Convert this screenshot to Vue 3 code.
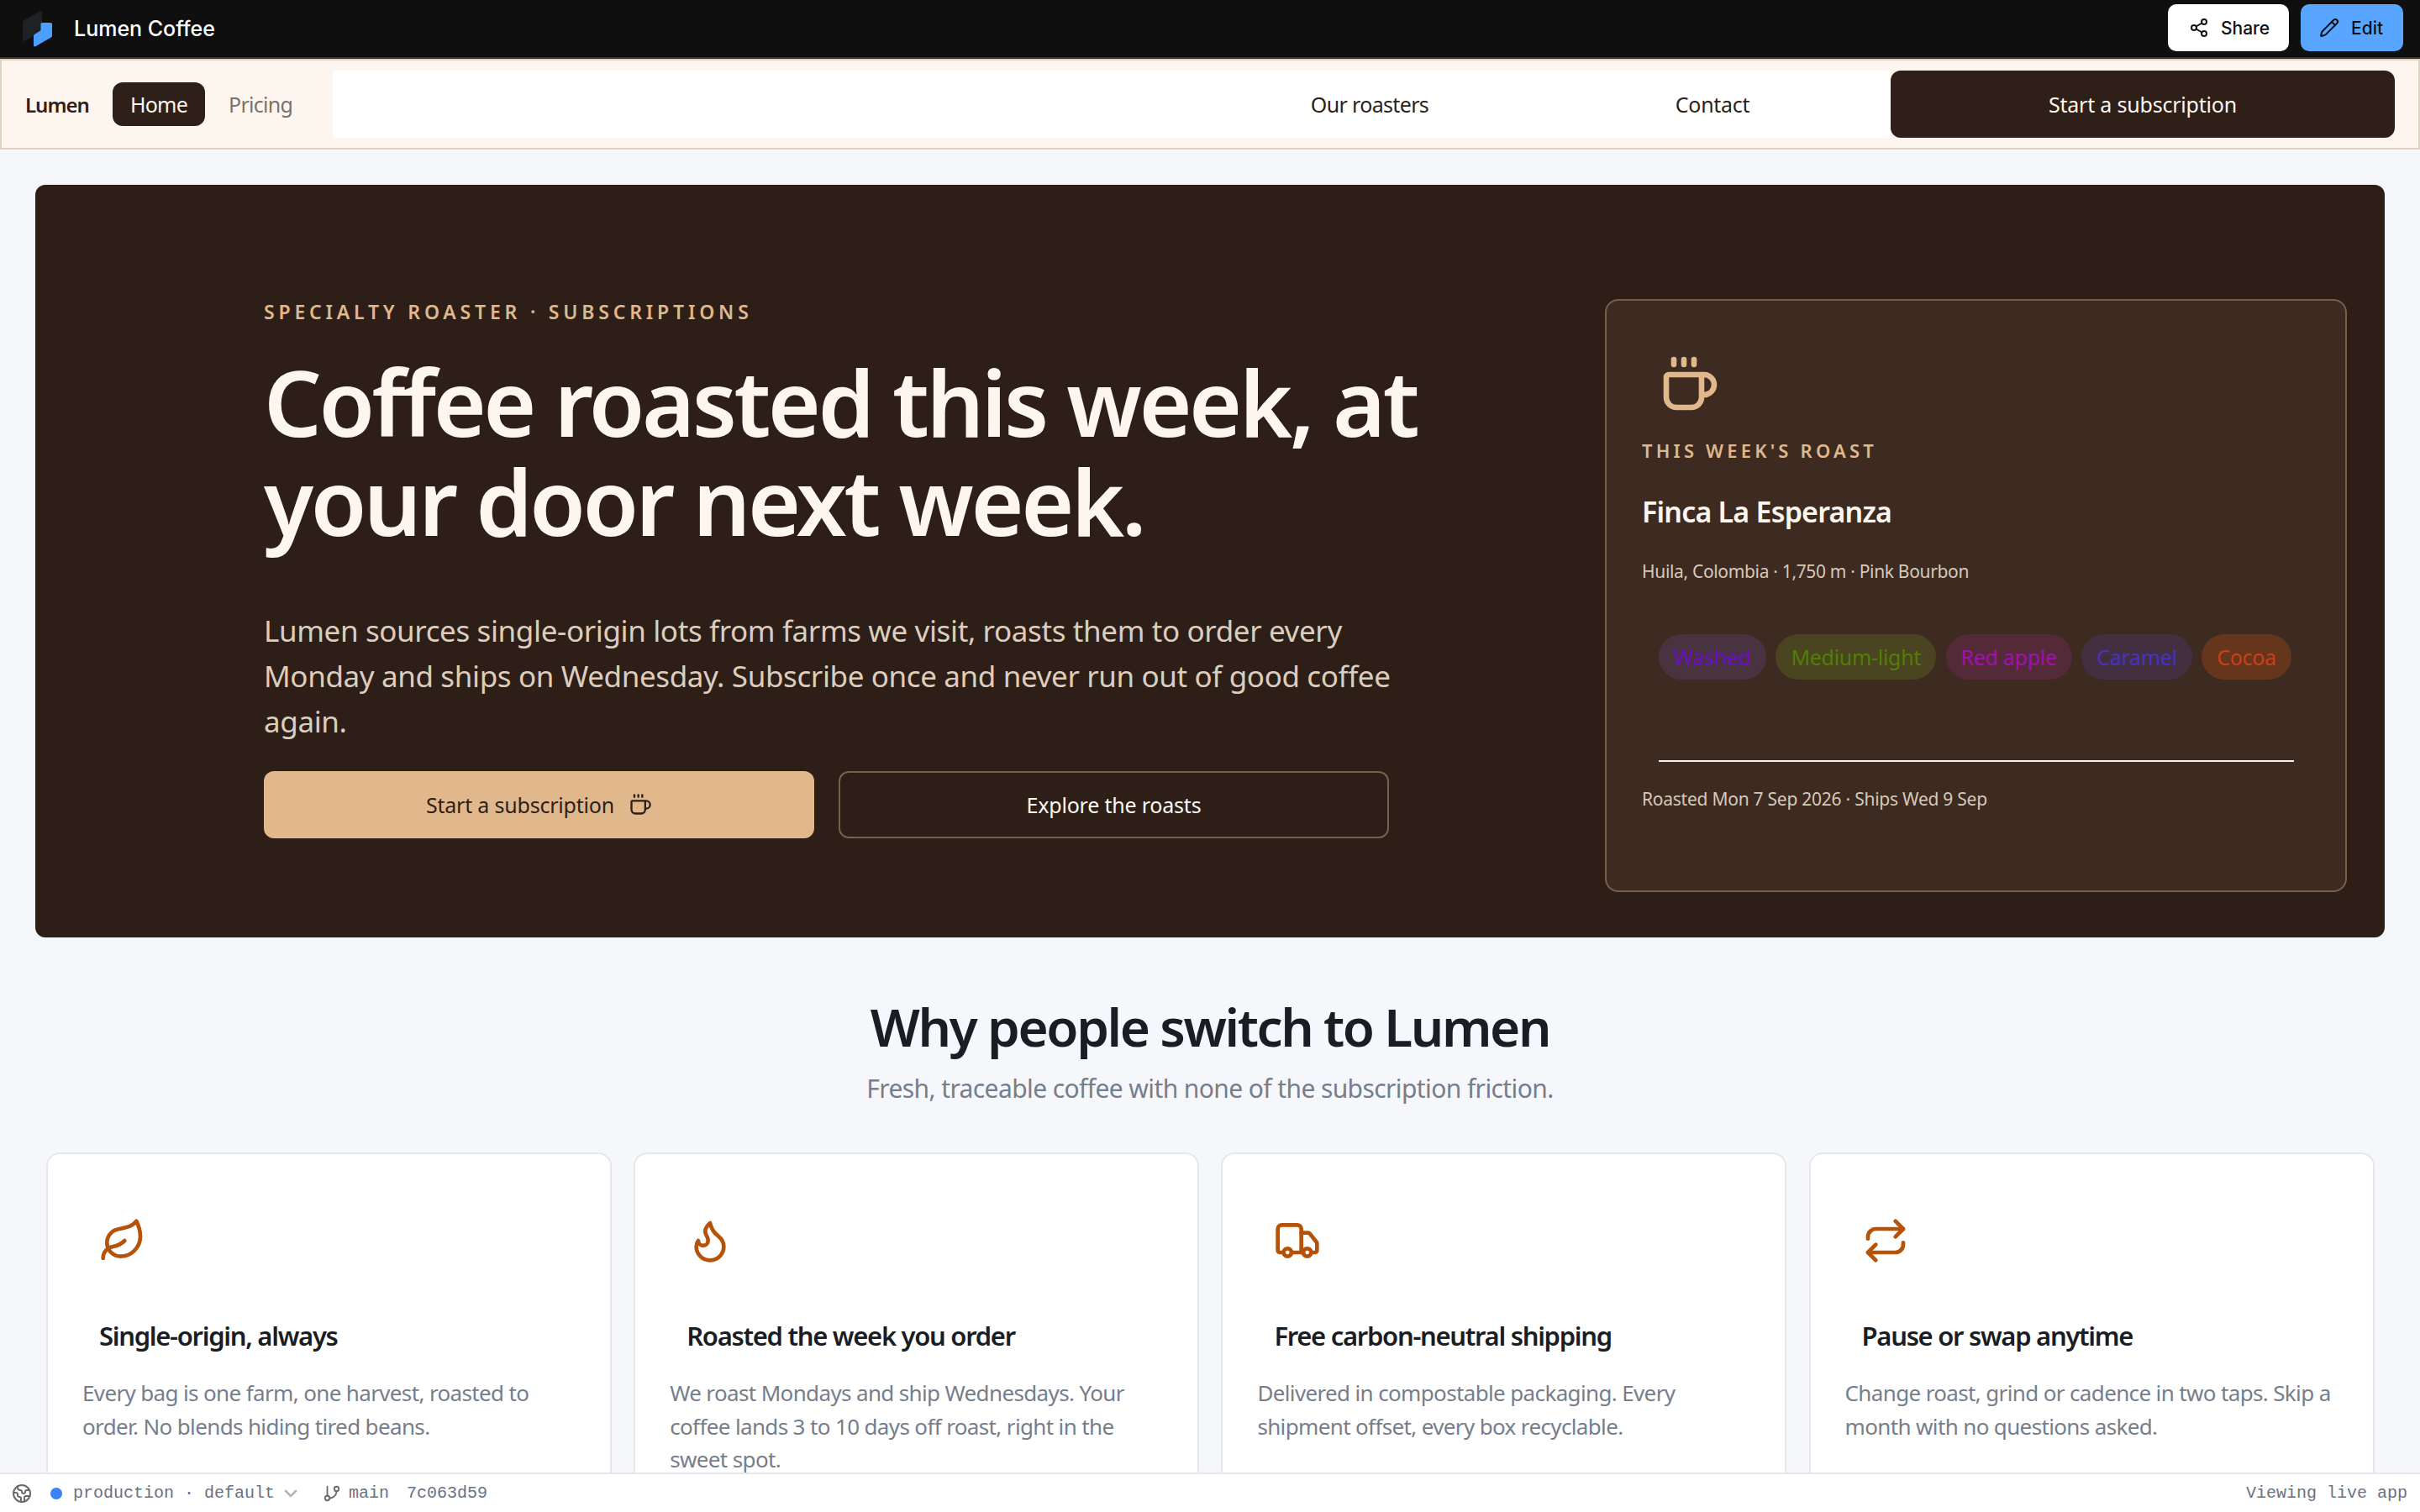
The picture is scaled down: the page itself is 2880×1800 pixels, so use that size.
<script setup>
const tags = [
  { label: 'Washed', c: 't1' },
  { label: 'Medium-light', c: 't2' },
  { label: 'Red apple', c: 't3' },
  { label: 'Caramel', c: 't4' },
  { label: 'Cocoa', c: 't5' }
]
const features = [
  { title: 'Single-origin, always', body: 'Every bag is one farm, one harvest, roasted to order. No blends hiding tired beans.', paths: ['M11 20A7 7 0 0 1 9.8 6.1C15.5 5 17 4.48 19 2c1 2 2 4.18 2 8 0 5.5-4.78 10-10 10Z', 'M2 21c0-3 1.85-5.36 5.08-6C9.5 14.52 12 13 13 12'], circles: [] },
  { title: 'Roasted the week you order', body: 'We roast Mondays and ship Wednesdays. Your coffee lands 3 to 10 days off roast, right in the sweet spot.', paths: ['M8.5 14.5A2.5 2.5 0 0 0 11 12c0-1.38-.5-2-1-3-1.072-2.143-.224-4.054 2-6 .5 2.5 2 4.9 4 6.5 2 1.6 3 3.5 3 5.5a7 7 0 1 1-14 0c0-1.153.433-2.294 1-3a2.5 2.5 0 0 0 2.5 2.5z'], circles: [] },
  { title: 'Free carbon-neutral shipping', body: 'Delivered in compostable packaging. Every shipment offset, every box recyclable.', paths: ['M14 18V6a2 2 0 0 0-2-2H4a2 2 0 0 0-2 2v11a1 1 0 0 0 1 1h2', 'M15 18H9', 'M19 18h2a1 1 0 0 0 1-1v-3.65a1 1 0 0 0-.22-.624l-3.48-4.35A1 1 0 0 0 17.52 8H14'], circles: [[17, 18], [7, 18]] },
  { title: 'Pause or swap anytime', body: 'Change roast, grind or cadence in two taps. Skip a month with no questions asked.', paths: ['m17 2 4 4-4 4', 'M3 11v-1a4 4 0 0 1 4-4h14', 'm7 22-4-4 4-4', 'M21 13v1a4 4 0 0 1-4 4H3'], circles: [] }
]
const cup = ['M10 2v2', 'M14 2v2', 'M16 8a1 1 0 0 1 1 1v8a4 4 0 0 1-4 4H7a4 4 0 0 1-4-4V9a1 1 0 0 1 1-1h14a4 4 0 1 1 0 8h-1', 'M6 2v2']
</script>

<template>
  <div class="app">
    <header class="topbar">
      <div class="brand">
        <svg class="logo" viewBox="0 0 36 44">
          <path d="M1.5 13 21.5 1.5V23L1.5 34.5Z" fill="#1e2125" stroke="#1e2125" stroke-width="3" stroke-linejoin="round" />
          <path d="M23 15.5H33.5V30L14.5 41V29.5L23 24Z" fill="#4d9fff" stroke="#4d9fff" stroke-width="3" stroke-linejoin="round" />
        </svg>
        <span class="brand-name">Lumen Coffee</span>
      </div>
      <div class="top-actions">
        <button class="top-btn share">
          <svg class="ic24" viewBox="0 0 24 24"><circle cx="18" cy="5" r="3" /><circle cx="6" cy="12" r="3" /><circle cx="18" cy="19" r="3" /><path d="M8.59 13.51 15.42 17.49" /><path d="M15.41 6.51 8.59 10.49" /></svg>
          <span>Share</span>
        </button>
        <button class="top-btn edit">
          <svg class="ic24" viewBox="0 0 24 24"><path d="M21.174 6.812a1 1 0 0 0-3.986-3.987L3.842 16.174a2 2 0 0 0-.5.83l-1.321 4.352a.5.5 0 0 0 .623.622l4.353-1.32a2 2 0 0 0 .83-.497z" /><path d="m15 5 4 4" /></svg>
          <span>Edit</span>
        </button>
      </div>
    </header>

    <main class="page">
      <nav class="nav">
        <span class="nav-logo">Lumen</span>
        <a class="nav-pill">Home</a>
        <a class="nav-muted">Pricing</a>
        <div class="nav-links">
          <a class="nav-link">Our roasters</a>
          <a class="nav-link">Contact</a>
        </div>
        <button class="nav-cta">Start a subscription</button>
      </nav>

      <section class="hero">
        <div class="hero-copy">
          <p class="eyebrow">SPECIALTY ROASTER · SUBSCRIPTIONS</p>
          <h1 class="hero-title">Coffee roasted this week, at your door next week.</h1>
          <p class="hero-text">Lumen sources single-origin lots from farms we visit, roasts them to order every Monday and ships on Wednesday. Subscribe once and never run out of good coffee again.</p>
          <div class="hero-btns">
            <button class="btn primary">
              <span>Start a subscription</span>
              <svg class="ic26" viewBox="0 0 24 24"><path v-for="d in cup" :key="d" :d="d" /></svg>
            </button>
            <button class="btn ghost"><span>Explore the roasts</span></button>
          </div>
        </div>
        <aside class="roast">
          <svg class="roast-icon" viewBox="0 0 24 24"><path v-for="d in cup" :key="d" :d="d" /></svg>
          <p class="roast-label">THIS WEEK'S ROAST</p>
          <h3 class="roast-name">Finca La Esperanza</h3>
          <p class="roast-meta">Huila, Colombia · 1,750 m · Pink Bourbon</p>
          <div class="tags">
            <span v-for="t in tags" :key="t.label" class="tag" :class="t.c">{{ t.label }}</span>
          </div>
          <hr class="rule" />
          <p class="roast-date">Roasted Mon 7 Sep 2026 · Ships Wed 9 Sep</p>
        </aside>
      </section>

      <section class="why">
        <h2 class="why-title">Why people switch to Lumen</h2>
        <p class="why-sub">Fresh, traceable coffee with none of the subscription friction.</p>
      </section>

      <section class="grid">
        <article v-for="f in features" :key="f.title" class="card">
          <svg class="card-icon" viewBox="0 0 24 24">
            <path v-for="d in f.paths" :key="d" :d="d" />
            <circle v-for="c in f.circles" :key="c[0]" :cx="c[0]" :cy="c[1]" r="2" />
          </svg>
          <h3 class="card-title">{{ f.title }}</h3>
          <p class="card-body">{{ f.body }}</p>
        </article>
      </section>
    </main>

    <footer class="status">
      <div class="status-left">
        <svg class="ic-globe" viewBox="0 0 24 24"><path d="M21.54 15H17a2 2 0 0 0-2 2v4.54" /><path d="M7 3.34V5a3 3 0 0 0 3 3a2 2 0 0 1 2 2c0 1.1.9 2 2 2a2 2 0 0 0 2-2c0-1.1.9-2 2-2h3.17" /><path d="M11 21.95V18a2 2 0 0 0-2-2a2 2 0 0 1-2-2v-1a2 2 0 0 0-2-2H2.05" /><circle cx="12" cy="12" r="10" /></svg>
        <span class="dot"></span>
        <span>production · default</span>
        <svg class="ic-chev" viewBox="0 0 24 24"><path d="m6 9 6 6 6-6" /></svg>
        <svg class="ic-branch" viewBox="0 0 24 24"><path d="M6 3v12" /><circle cx="18" cy="6" r="3" /><circle cx="6" cy="18" r="3" /><path d="M18 9a9 9 0 0 1-9 9" /></svg>
        <span>main</span>
        <span class="sha">7c063d59</span>
      </div>
      <span>Viewing live app</span>
    </footer>
  </div>
</template>

<style>
html, body { margin: 0; padding: 0; background: #f5f7fa; }
</style>

<style scoped>
* { box-sizing: border-box; }
svg { fill: none; stroke: currentColor; stroke-width: 2; stroke-linecap: round; stroke-linejoin: round; flex: none; display: block; }
p, h1, h2, h3 { margin: 0; }
button { font: inherit; border: 0; cursor: pointer; }

.app { width: 2880px; height: 1800px; display: flex; flex-direction: column; overflow: hidden; background: #f5f7fa; font-family: "Noto Sans", "Liberation Sans", sans-serif; }

.topbar { height: 70px; flex: none; background: #0f0f10; border-bottom: 2px solid #33322f; display: flex; align-items: center; justify-content: space-between; padding: 0 20px 0 27px; font-family: Inter, sans-serif; }
.brand { display: flex; align-items: center; gap: 25px; }
.logo { width: 36px; height: 44px; stroke: none; margin-top: 2px; }
.brand-name { color: #fff; font-size: 25px; font-weight: 500; }
.top-actions { display: flex; gap: 14px; margin-top: -2px; }
.top-btn { height: 56px; border-radius: 10px; display: flex; align-items: center; font-size: 21px; font-weight: 500; color: #0f1115; gap: 14px; }
.ic24 { width: 24px; height: 24px; }
.share { width: 144px; background: #fff; padding-left: 25px; }
.edit { width: 122px; background: #58a6ff; padding-left: 22px; }

.page { flex: 1; min-height: 0; overflow: hidden; }

.nav { height: 108px; background: #fdf6ee; border: 2px solid #e0d0bf; display: flex; align-items: center; padding: 0 28px; }
.nav-logo { font-size: 24px; font-weight: 600; color: #2e1f18; letter-spacing: -1px; width: 104px; }
.nav-pill { width: 110px; height: 52px; border-radius: 12px; background: #2e1f18; color: #fdf6ee; font-size: 25px; display: flex; align-items: center; justify-content: center; letter-spacing: -0.8px; }
.nav-muted { color: #7a726b; font-size: 25px; margin-left: 28px; width: 124px; letter-spacing: -0.7px; }
.nav-links { flex: 1; height: 80px; background: #fff; display: grid; grid-template-columns: 1fr 392px 424px; align-items: center; }
.nav-link { grid-column: auto; text-align: center; color: #2e1f18; font-size: 25px; letter-spacing: -0.3px; }
.nav-link:first-child { grid-column: 2; letter-spacing: -0.65px; }
.nav-cta { width: 600px; height: 80px; border-radius: 12px; background: #2e1f18; color: #fdf6ee; font-size: 25px; letter-spacing: -0.2px; }

.hero { margin: 42px 42px 0; height: 896px; background: #2d1f18; border-radius: 12px; display: flex; padding: 136px 45px 0 272px; justify-content: space-between; }
.hero-copy { width: 1400px; }
.eyebrow { color: #e0b88c; font-size: 23px; font-weight: 600; letter-spacing: 4.8px; line-height: 30px; }
.hero-title { color: #fdf6ee; font-size: 108px; font-weight: 600; line-height: 118px; letter-spacing: -3.5px; margin-top: 34px; }
.hero-text { color: #dccdbd; font-size: 35px; line-height: 54px; margin-top: 68px; width: 1360px; letter-spacing: -0.38px; }
.hero-btns { display: flex; gap: 29px; margin-top: 32px; }
.btn { width: 655px; height: 80px; border-radius: 12px; font-size: 25px; display: flex; align-items: center; justify-content: center; letter-spacing: -0.2px; }
.primary { background: #e0b88c; color: #2e1f18; gap: 17px; }
.ghost { background: transparent; border: 2px solid #7a5f4d; color: #fdf6ee; }
.ic26 { width: 28px; height: 28px; }

.roast { width: 883px; height: 706px; background: #3d2b22; border: 2px solid #7a5f4d; border-radius: 16px; padding: 64px 42px 0; }
.roast-icon { width: 72px; height: 72px; margin-left: 20px; color: #e0b88c; stroke-width: 2.2; }
.roast-label { color: #e0b88c; font-size: 22px; font-weight: 600; letter-spacing: 4.2px; line-height: 30px; margin-top: 27px; }
.roast-name { color: #fdf6ee; font-size: 34px; font-weight: 600; letter-spacing: -0.8px; line-height: 44px; margin-top: 36px; }
.roast-meta { color: #d7c8b8; font-size: 21px; line-height: 30px; margin-top: 34px; letter-spacing: -0.33px; }
.tags { display: flex; gap: 11.5px; margin: 60px 0 0 20px; }
.tag { height: 54px; border-radius: 27px; padding: 0 18px; display: flex; align-items: center; font-size: 25px; letter-spacing: -0.3px; }
.t1 { background: #4a3340; color: #6a0dc8; }
.t2 { background: #4a4520; color: #4f7f05; }
.t3 { background: #552a38; color: #a30fb0; }
.t4 { background: #423040; color: #4a30c0; }
.t5 { background: #65351c; color: #c9401a; }
.rule { width: 756px; height: 2px; background: #f5efe8; border: 0; margin: 96px 0 0 20px; }
.roast-date { color: #d7c8b8; font-size: 21px; line-height: 30px; margin-top: 29px; letter-spacing: -0.25px; }

.why { text-align: center; padding-top: 67px; }
.why-title { font-size: 62px; font-weight: 600; line-height: 78px; color: #1a1d24; letter-spacing: -2.4px; }
.why-sub { font-size: 30px; line-height: 44px; color: #767e8b; margin-top: 13px; letter-spacing: -0.6px; }

.grid { display: grid; grid-template-columns: repeat(4, 673px); gap: 26.2px; margin: 54px 0 0 55px; }
.card { height: 520px; background: #fff; border: 2px solid #e5e7eb; border-radius: 16px; padding: 75px 42px 0 41px; }
.card-icon { width: 56px; height: 56px; margin-left: 20px; color: #b45309; }
.card-title { font-size: 31px; font-weight: 600; color: #1a1d24; line-height: 42px; margin: 64px 0 0 20px; letter-spacing: -1.3px; }
.card-body { font-size: 26px; line-height: 39.5px; color: #767e8b; margin-top: 28px; letter-spacing: -0.64px; }

.status { height: 47px; flex: none; background: #fff; border-top: 2px solid #e5e7eb; display: flex; align-items: center; justify-content: space-between; padding: 0 15px; font-family: "Liberation Mono", monospace; font-size: 20px; color: #6b7280; }
.status-left { display: flex; align-items: center; }
.ic-globe { width: 24px; height: 24px; margin-left: -1px; color: #6b6b6b; }
.dot { width: 14px; height: 14px; border-radius: 50%; background: #3b82f6; margin: 0 13px 0 22px; }
.ic-chev { width: 24px; height: 24px; margin-left: 7px; color: #b5b5b5; stroke-width: 2.6; }
.ic-branch { width: 22px; height: 22px; margin: 0 9px 0 26px; color: #6b6b6b; }
.sha { margin-left: 21px; }
</style>
